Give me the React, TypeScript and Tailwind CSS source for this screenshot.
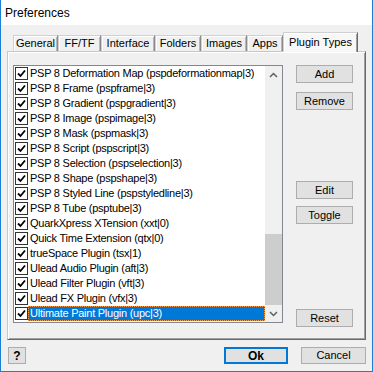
import React from "react";

const items = [
  "PSP 8 Deformation Map (pspdeformationmap|3)",
  "PSP 8 Frame (pspframe|3)",
  "PSP 8 Gradient (pspgradient|3)",
  "PSP 8 Image (pspimage|3)",
  "PSP 8 Mask (pspmask|3)",
  "PSP 8 Script (pspscript|3)",
  "PSP 8 Selection (pspselection|3)",
  "PSP 8 Shape (pspshape|3)",
  "PSP 8 Styled Line (pspstyledline|3)",
  "PSP 8 Tube (psptube|3)",
  "QuarkXpress XTension (xxt|0)",
  "Quick Time Extension (qtx|0)",
  "trueSpace Plugin (tsx|1)",
  "Ulead Audio Plugin (aft|3)",
  "Ulead Filter Plugin (vft|3)",
  "Ulead FX Plugin (vfx|3)",
  "Ultimate Paint Plugin (upc|3)",
];

const tabs: { label: string; w: string }[] = [
  { label: "General", w: "w-[45px]" },
  { label: "FF/TF", w: "w-[43px]" },
  { label: "Interface", w: "w-[54px]" },
  { label: "Folders", w: "w-[46px]" },
  { label: "Images", w: "w-[46px]" },
  { label: "Apps", w: "w-[36px]" },
];

function Check() {
  return (
    <div className="w-[13px] h-[13px] shrink-0 border border-[#333] bg-white flex items-center justify-center">
      <svg width="9" height="9" viewBox="0 0 9 9">
        <path d="M1 4.5 L3.5 7 L8 1.5" stroke="#000" strokeWidth="1.8" fill="none" />
      </svg>
    </div>
  );
}

function Btn({ children, className = "" }: { children: React.ReactNode; className?: string }) {
  return (
    <div
      className={`h-[18px] w-[57px] bg-[#e1e1e1] border border-[#adadad] flex items-center justify-center text-[11px] leading-none ${className}`}
    >
      {children}
    </div>
  );
}

export default function App() {
  return (
    <div className="w-[373px] h-[372px] flex flex-col bg-[#f0f0f0] border-x border-b border-[#1c7fd6] font-['Liberation_Sans',Arial,sans-serif] text-[11px] text-black overflow-hidden">
      <div className="h-[25px] shrink-0 bg-white flex items-center pl-[4px] text-[12px]">Preferences</div>
      <div className="flex flex-col px-[6px] pt-[7px]">
        {/* Tabs */}
        <div className="h-[19px] flex items-end pl-[6px]">
          {tabs.map((t) => (
            <div
              key={t.label}
              className={`${t.w} h-[16px] flex items-center justify-center border-l border-t border-r border-l-[#d0d0d0] border-t-[#d0d0d0] border-r-[#8a8a8a] shadow-[inset_1px_1px_0_#ffffff,inset_-1px_0_0_#b8b8b8] leading-none`}
            >
              {t.label}
            </div>
          ))}
          <div className="relative z-10 w-[75px] h-[20px] -mb-[1px] flex items-start pt-[4px] justify-center bg-[#f7f7f7] border-l border-t border-r border-l-[#d0d0d0] border-t-[#d0d0d0] border-r-[#696969] shadow-[inset_1px_1px_0_#ffffff,inset_-1px_0_0_#a0a0a0] leading-none">
            Plugin Types
          </div>
        </div>
        {/* Panel */}
        <div className="h-[289px] flex border border-l-[#c8c8c8] border-t-[#c8c8c8] border-r-[#696969] border-b-[#696969] shadow-[inset_1px_1px_0_#ffffff,inset_-1px_-1px_0_#a0a0a0] pl-[5px] pt-[13px]">
          {/* List box */}
          <div className="w-[270px] h-[258px] border border-[#828790] bg-white flex">
            <div className="w-[251px] flex flex-col">
              {items.map((it, i) => {
                const sel = i === items.length - 1;
                return (
                  <div key={it} className="h-[15px] flex items-center pl-[1px]">
                    <Check />
                    <div
                      className={`flex-1 h-[15px] pl-[1px] leading-[13px] tracking-[-0.25px] whitespace-nowrap overflow-hidden ${
                        sel ? "bg-[#0078d7] text-white border border-dotted border-[#f89b4a]" : "border border-transparent"
                      }`}
                    >
                      {it}
                    </div>
                  </div>
                );
              })}
            </div>
            <div className="w-[17px] flex flex-col bg-[#f0f0f0]">
              <div className="h-[17px] flex items-center justify-center">
                <svg width="9" height="6" viewBox="0 0 9 6">
                  <path d="M1 5 L4.5 1.5 L8 5" stroke="#606060" strokeWidth="1.5" fill="none" />
                </svg>
              </div>
              <div className="flex-1 flex flex-col justify-end">
                <div className="h-[71px] bg-[#cdcdcd]" />
              </div>
              <div className="h-[17px] flex items-center justify-center">
                <svg width="9" height="6" viewBox="0 0 9 6">
                  <path d="M1 1 L4.5 4.5 L8 1" stroke="#606060" strokeWidth="1.5" fill="none" />
                </svg>
              </div>
            </div>
          </div>
          {/* Buttons */}
          <div className="ml-[13px] flex flex-col">
            <Btn>Add</Btn>
            <Btn className="mt-[9px]">Remove</Btn>
            <Btn className="mt-[71px]">Edit</Btn>
            <Btn className="mt-[7px]">Toggle</Btn>
            <Btn className="mt-[85px]">Reset</Btn>
          </div>
        </div>
        {/* Bottom buttons */}
        <div className="mt-[7px] flex items-center">
          <div className="ml-[1px] w-[18px] h-[17px] bg-[#e1e1e1] border border-[#adadad] flex items-center justify-center font-bold text-[12px] leading-none">
            ?
          </div>
          <div className="flex-1" />
          <div className="w-[64px] h-[17px] bg-[#e1e1e1] border-2 border-[#0078d7] flex items-center justify-center font-bold text-[12px] leading-none">
            Ok
          </div>
          <div className="ml-[13px] w-[65px] h-[17px] bg-[#e1e1e1] border border-[#adadad] flex items-center justify-center text-[11px] leading-none">
            Cancel
          </div>
        </div>
      </div>
    </div>
  );
}
